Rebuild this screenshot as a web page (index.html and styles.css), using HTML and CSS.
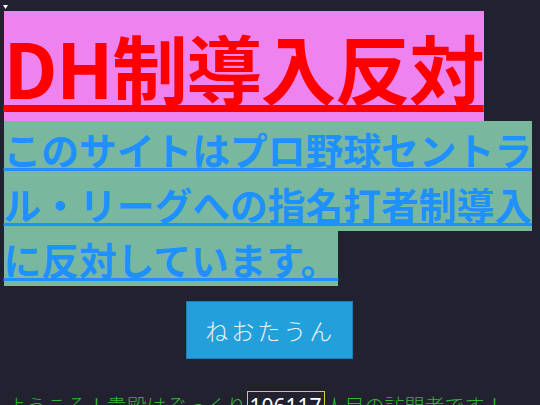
FILE: index.html
```html
<!DOCTYPE html>
<html lang="ja">
<head>
<meta charset="utf-8">
<title>DH制導入反対</title>
<link rel="stylesheet" href="styles.css">
</head>
<body>
<div class="topbar"><svg class="marker" width="5" height="4" viewBox="0 0 5 4"><polygon points="0,0 5,0 2.5,4" fill="#ffffff"/></svg></div>
<h1 class="title"><span class="title-text">DH制導入反対</span></h1>
<p class="lead"><span class="lead-text">このサイトはプロ野球セントラル・リーグへの指名打者制導入に反対しています。</span></p>
<div class="btn-row"><a class="btn" href="#">ねおたうん</a></div>
<p class="welcome">ようこそ！貴殿はぞっくり<span class="counter">106117</span>人目の訪問者です！</p>
</body>
</html>
```
FILE: styles.css
```css
html, body {
  background: #222130;
}
body {
  margin: 0;
  padding: 0 4px 0 3.5px;
  font-family: "Noto Sans CJK JP", "Noto Sans", sans-serif;
  overflow: hidden;
  height: 405px;
}
.topbar {
  height: 11px;
  display: flex;
  align-items: flex-start;
}
.marker {
  display: block;
  margin-top: 5px;
  margin-left: -0.5px;
}
.title {
  margin: 0;
  font-size: 75.5px;
  font-weight: 700;
  line-height: normal;
}
.title-text {
  background: violet;
  color: #ff0000;
  letter-spacing: -1.2px;
  text-decoration: underline;
  text-decoration-thickness: 7px;
  text-underline-offset: 6px;
}
.lead {
  margin: 0;
  font-size: 37.75px;
  font-weight: 700;
  line-height: normal;
}
.lead-text {
  background: #79b79e;
  color: dodgerblue;
  text-decoration: underline;
  text-decoration-thickness: 3px;
  text-underline-offset: 3px;
}
.btn-row {
  display: flex;
  justify-content: center;
  margin-top: 15px;
}
.btn {
  display: flex;
  align-items: center;
  height: 56px;
  padding: 0 17px 0 18px;
  background: #23a0dc;
  border: 1px solid #1c7fb6;
  color: #eef0f6;
  font-size: 23px;
  font-weight: 300;
  letter-spacing: 3px;
  text-decoration: none;
}
.welcome {
  margin: 32px 0 0;
  padding-left: 3px;
  font-size: 20px;
  font-weight: 300;
  color: #33b533;
  line-height: 1.5;
}
.counter {
  color: #ffffff;
  border: 1.5px solid #d2d23a;
  padding: 0 2px;
  font-family: "Noto Sans", sans-serif;
  font-size: 21px;
  font-weight: 400;
}
```
